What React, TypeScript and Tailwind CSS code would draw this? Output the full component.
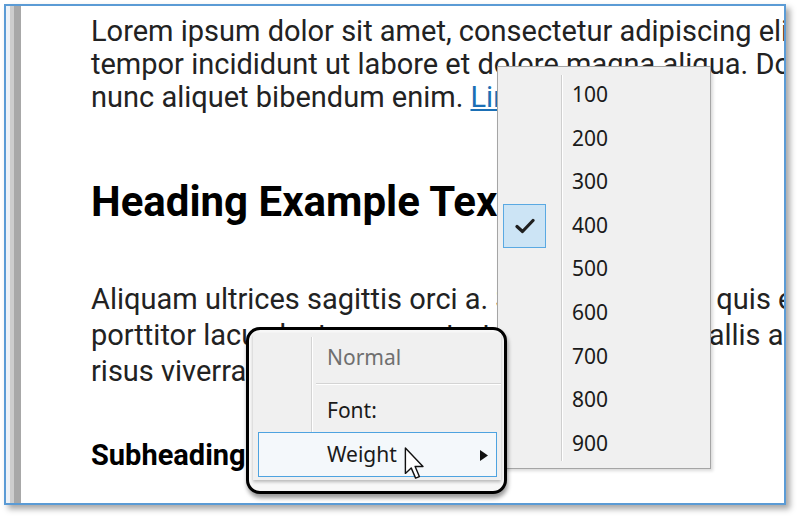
import * as React from "react";

const weights = ["100", "200", "300", "400", "500", "600", "700", "800", "900"];

function Check() {
   return (
      <svg width="20" height="16" viewBox="0 0 20 16" fill="none">
         <path d="M2 8.5 L7.5 13.5 L18 2.5" stroke="#1f1f1f" strokeWidth="3.2" strokeLinecap="round" strokeLinejoin="round" />
      </svg>
   );
}

function Cursor() {
   return (
      <svg width="21" height="33" viewBox="0 0 13 21" fill="none">
         <path d="M0.7 0.7 V16.8 L4.4 13.3 L7.2 19.8 L9.6 18.8 L6.9 12.4 H11.9 Z" fill="#fff" stroke="#111" strokeWidth="0.9" strokeLinejoin="round" />
      </svg>
   );
}

function WeightMenu() {
   return (
      <div className="absolute left-[491px] top-[60px] z-10 h-[403px] w-[214px] border border-[#a5a5a5] bg-[#f0f0f0] shadow-[2px_2px_3px_rgba(0,0,0,0.15)]">
         <div className="absolute left-[63px] top-[8px] h-[386px] w-px bg-[#cfcfcf]" />
         <div className="absolute left-[64px] top-[8px] h-[386px] w-px bg-white" />
         <div className="flex flex-col pt-[6px]">
            {weights.map((w) => (
               <div key={w} className="relative flex h-[43.6px] items-center">
                  <div className="flex w-[74px] pl-[5px]">
                     {w === "400" ? (
                        <div className="flex h-[44px] w-[43px] items-center justify-center border border-[#5aa9e2] bg-[#cce4f5]">
                           <Check />
                        </div>
                     ) : null}
                  </div>
                  <span className="text-[21px] text-[#1a1a1a]" style={{ fontFamily: '"Noto Sans", sans-serif' }}>
                     {w}
                  </span>
               </div>
            ))}
         </div>
      </div>
   );
}

function ContextMenu() {
   return (
      <div className="absolute left-[240px] top-[321px] z-20 h-[167px] w-[261px] rounded-[14px] border-[3px] border-black bg-[#f7f7f7] shadow-[1px_4px_4px_rgba(0,0,0,0.4)]">
         <div
            className="absolute left-[4px] top-[3px] h-[147px] w-[248px] bg-[#f0f0f0] shadow-[0_2px_3px_rgba(0,0,0,0.25)]"
            style={{ fontFamily: '"Noto Sans", sans-serif' }}>
            <div className="absolute left-[58px] top-[4px] h-[139px] w-px bg-[#d4d4d4]" />
            <div className="absolute left-[59px] top-[4px] h-[139px] w-px bg-white" />
            <div className="flex h-[50px] items-center pl-[74px] text-[21px] text-[#6f6f6f]">Normal</div>
            <div className="ml-[63px] h-px bg-[#d4d4d4]" />
            <div className="ml-[63px] h-px bg-white" />
            <div className="flex h-[47px] items-center pl-[74px] pt-[4px] text-[21px] text-[#1a1a1a]">Font:</div>
            <div className="relative ml-[5px] flex h-[45px] w-[239px] items-center border border-[#4ea3e0] bg-[#f4f8fb] pl-[68px] text-[21px] text-[#1a1a1a]">
               Weight
               <svg className="absolute left-[221px] top-[17px]" width="8" height="11" viewBox="0 0 8 11">
                  <path d="M0 0 L8 5.5 L0 11 Z" fill="#111" />
               </svg>
            </div>
            <div className="absolute left-[151px] top-[114px]">
               <Cursor />
            </div>
         </div>
      </div>
   );
}

export default function App() {
   const body = { fontFamily: "Roboto, sans-serif" };
   return (
      <div className="min-h-[518px] w-[801px] bg-white p-[4px]">
         <div className="relative flex h-[501px] w-[782px] overflow-hidden border-2 border-[#5b9bd5] bg-white shadow-[4px_4px_6px_rgba(0,0,0,0.35)]">
            <div className="w-[4px] shrink-0 bg-[#eef2f7]" />
            <div className="w-[4px] shrink-0 bg-[#cdcdcd]" />
            <div className="w-[7px] shrink-0 bg-[#a8a8a8]" />
            <div className="min-w-0 flex-1 pl-[70px] pt-[9px] text-[#222]" style={body}>
               <div className="whitespace-nowrap text-[29px] leading-[33px]">
                  <div>Lorem ipsum dolor sit amet, consectetur adipiscing elit, sed do eiusmod</div>
                  <div>tempor incididunt ut labore et dolore magna aliqua. Donec ultrices tincidunt</div>
                  <div>
                     nunc aliquet bibendum enim. <span className="text-[#1b6fb5] underline">Link text here</span>
                  </div>
               </div>
               <h1 className="mt-[63px] whitespace-nowrap text-[42px] font-bold leading-[49px] text-black">
                  Heading Example Text
               </h1>
               <div className="mt-[55px] whitespace-nowrap text-[29px] leading-[36px]">
                  <div>Aliquam ultrices sagittis orci a. Scelerisque ante quis eleifend</div>
                  <div>porttitor lacus luctus purus tortor posuere. Convallis a</div>
                  <div>risus viverra adipiscing at in tellus integer</div>
               </div>
               <h2 className="mt-[50px] whitespace-nowrap text-[29px] font-bold leading-[33px] text-black">
                  Subheading Example
               </h2>
            </div>
            <WeightMenu />
            <ContextMenu />
         </div>
      </div>
   );
}
